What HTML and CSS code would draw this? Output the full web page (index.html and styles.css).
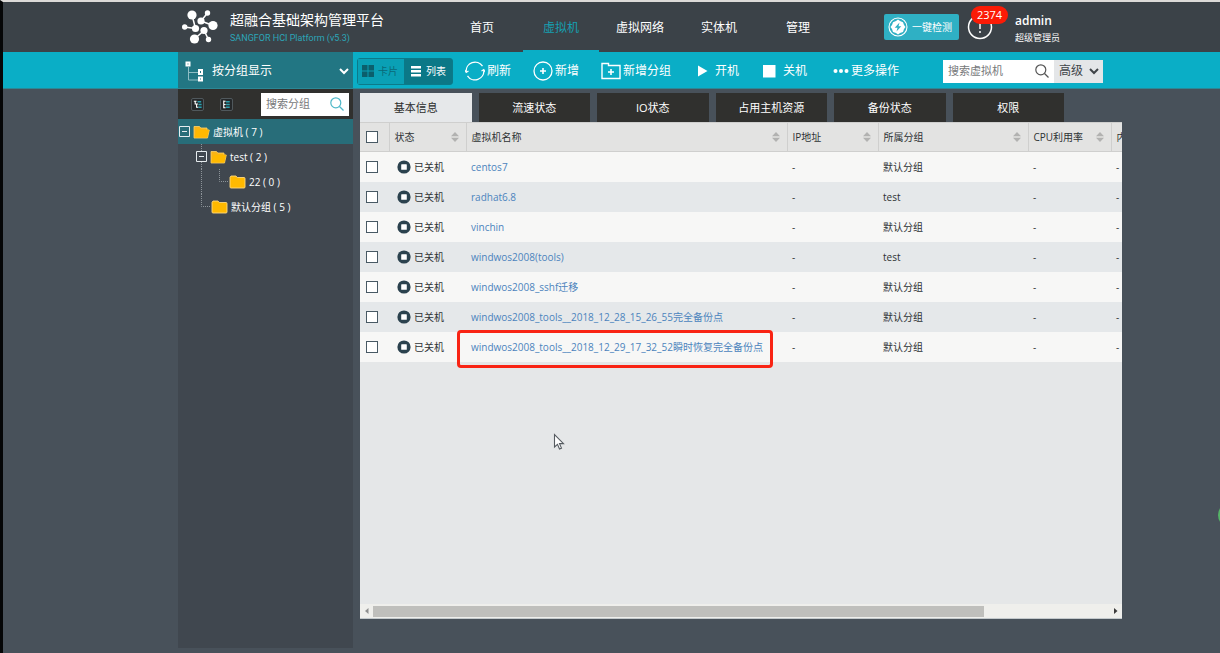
FILE: index.html
```html
<!DOCTYPE html>
<html lang="zh-CN">
<head>
<meta charset="utf-8">
<title>超融合基础架构管理平台</title>
<link rel="stylesheet" href="styles.css">
</head>
<body>
<svg class="defs" aria-hidden="true">
  <symbol id="i-stop" viewBox="0 0 14 14"><circle cx="7" cy="7" r="6.6" fill="#2b424e"/><rect x="4.2" y="4.2" width="5.6" height="5.6" rx=".6" fill="#fff"/></symbol>
  <symbol id="i-sort" viewBox="0 0 8 10"><path d="M0 4.2L4 0l4 4.200zM0 5.800h8L4 10z" fill="#b2b2b1"/></symbol>
  <symbol id="i-search" viewBox="0 0 14 14"><circle cx="5.800" cy="5.800" r="5" fill="none" stroke="currentColor" stroke-width="1.200"/><path d="M9.500 9.500l4 4" stroke="currentColor" stroke-width="1.300"/></symbol>
  <symbol id="i-chevron" viewBox="0 0 10 7"><path d="M1 1l4 4 4-4" fill="none" stroke="currentColor" stroke-width="2"/></symbol>
  <symbol id="i-open" viewBox="0 0 17 14"><path d="M1 12.500V1.500h5.500l1.300 1.500H14v2h2.300l-1.800 8H1z" fill="#f9b417" stroke="#ffd36b" stroke-width=".8"/><path d="M1.500 12.600L3.500 4.800H16l-1.700 7.800z" fill="#ffb900"/></symbol>
  <symbol id="i-folder" viewBox="0 0 17 14"><path d="M1 2.300L2 1h5l1.200 1.500H15q1 0 1 1V12q0 1-1 1H2q-1 0-1-1z" fill="#ffb900" stroke="#ffd97f" stroke-width=".9"/></symbol>
  <symbol id="i-minus" viewBox="0 0 11 11"><path d="M.5.5h10v10H.5zM3 5.500h5" fill="none" stroke="#e6ecef"/></symbol>
</svg>

<header class="header">
  <div class="wrap header-in">
    <div class="brand">
      <svg class="logo" viewBox="0 0 36 34" fill="#fff" stroke="#fff">
        <g stroke-width="1.500"><path d="M10 5l3.500 13.500M2.500 17l11 1.500M19 11l6.500-8M19 11l12 4.500M22 20.500l4.500 9M22 20.500l-9.500 8.500"/></g>
        <g stroke="none"><circle cx="10" cy="5" r="4.600"/><circle cx="25.500" cy="3" r="2.700"/><circle cx="2.700" cy="17" r="2.700"/><circle cx="13.500" cy="18.500" r="3.600"/><circle cx="19" cy="11" r="3.600"/><circle cx="31" cy="15.500" r="4.600"/><circle cx="22" cy="20.500" r="3.600"/><circle cx="12.500" cy="29" r="4.600"/><circle cx="26.500" cy="29.500" r="2.700"/></g>
      </svg>
      <div>
        <div class="brand-name">超融合基础架构管理平台</div>
        <div class="brand-sub">SANGFOR HCI Platform (v5.3)</div>
      </div>
    </div>
    <nav class="nav">
      <a href="#">首页</a><a href="#" class="on">虚拟机</a><a href="#">虚拟网络</a><a href="#">实体机</a><a href="#">管理</a>
    </nav>
    <div class="tools">
      <button class="detect" type="button"><svg class="ic20" viewBox="0 0 20 20"><circle cx="10" cy="10" r="9" fill="none" stroke="#fff" stroke-width="1.100"/><path d="M10 2.500l2 1.600 3 1.100 1 2.800 1.500 2-1.500 2-1 3-3 1-2 1.500L8 16l-3-1-1-3-1.500-2L4 8l1-2.800 3-1.100z" fill="#fff"/><path d="M11.500 5.500L6.700 10.700h2.800L8.500 14.500l4.800-5.200h-2.800z" fill="#2fb0c4"/></svg>一键检测</button>
      <button class="alert" type="button" aria-label="告警"><svg class="ic26" viewBox="0 0 26 26"><circle cx="13" cy="13" r="11.500" fill="none" stroke="#fff" stroke-width="1.500"/><path d="M13 9v6M13 17v2" stroke="#fff" stroke-width="1.500"/></svg><span class="badge">2374</span></button>
      <div class="user"><div class="user-name">admin</div><div class="user-role">超级管理员</div></div>
    </div>
  </div>
</header>

<div class="bar">
  <div class="wrap bar-in">
    <div class="group-mode">
      <svg class="tree-ic" viewBox="0 0 19 21"><path d="M3.500 6v13H13M3.500 11.500H13" fill="none" stroke="#8fbdc4"/><g fill="none" stroke="#fff" stroke-width="2"><path d="M1.500 1.500h3v3h-3zM14 9h3v4h-3zM14 16.500h3v3h-3z"/></g></svg>
      <select aria-label="显示方式"><option>按分组显示</option></select>
      <svg class="chev" aria-hidden="true"><use href="#i-chevron"/></svg>
    </div>
    <div class="bar-tools">
      <div class="toggle">
        <button type="button" class="card"><svg class="ic12" viewBox="0 0 12 12"><path d="M0 0h5.500v5.500H0zM6.500 0H12v5.500H6.500zM0 6.500h5.500V12H0zM6.500 6.500H12V12H6.500z" fill="#0b5f6c"/></svg>卡片</button>
        <button type="button" class="list"><svg class="ic12" viewBox="0 0 12 12"><path d="M1 1h10v2.500H1zM1 5h10v2.500H1zM1 9h10v2.500H1z" fill="#fff"/></svg>列表</button>
      </div>
      <div class="acts">
        <button type="button"><svg class="ic20" viewBox="0 0 20 20" fill="none" stroke="#fff" stroke-width="1.300"><path d="M1.200 11A8.900 8.900 0 0 1 17.500 5.200M18.800 9A8.900 8.900 0 0 1 2.500 14.800"/><path d="M0 9l1.200 2.500L3.500 10M20 11l-1.200-2.500L16.500 10" stroke-width="1.100"/></svg>刷新</button>
        <button type="button"><svg class="ic20" viewBox="0 0 20 20" fill="none" stroke="#fff"><circle cx="10" cy="10" r="9" stroke-width="1.300"/><path d="M10 7v6M7 10h6" stroke-width="1.600"/></svg>新增</button>
        <button type="button"><svg class="ic20" viewBox="0 0 20 20" fill="none" stroke="#fff"><path d="M1 17.500v-15h6.500v2H19v13z" stroke-width="1.400"/><path d="M10 8v6M7 11h6" stroke-width="1.600"/></svg>新增分组</button>
        <button type="button"><svg class="ic20" viewBox="0 0 20 20"><path d="M5 4.500L14.500 10 5 15.500z" fill="#fff"/></svg>开机</button>
        <button type="button"><svg class="ic20" viewBox="0 0 20 20"><path d="M2 4h12.500v12.500H2z" fill="#fff"/></svg>关机</button>
        <button type="button"><svg class="ic20" viewBox="0 0 20 20" fill="#fff"><circle cx="6.500" cy="10" r="2"/><circle cx="12" cy="10" r="2"/><circle cx="17.500" cy="10" r="2"/></svg>更多操作</button>
      </div>
      <div class="vm-search">
        <input type="text" placeholder="搜索虚拟机" aria-label="搜索虚拟机">
        <svg class="ic14" aria-hidden="true"><use href="#i-search"/></svg>
        <div class="adv"><select aria-label="高级"><option>高级</option></select><svg class="chev" aria-hidden="true"><use href="#i-chevron"/></svg></div>
      </div>
    </div>
  </div>
</div>

<main class="wrap main">
  <aside class="side">
    <div class="side-top">
      <button class="mini" type="button" aria-label="展开"><svg viewBox="0 0 12 12" fill="none"><path d="M2 2.500h3M3.500 2.500v3h3M5 5.500v3.500h2" stroke="#fff" stroke-width="1.200"/><path d="M6 3h4M7 6h3.500M7 9h3.500" stroke="#2b9fae" stroke-width="1.400"/></svg></button>
      <button class="mini" type="button" aria-label="折叠"><svg viewBox="0 0 12 12" fill="none"><path d="M3 1.500V10M3 2.500h2M3 6h2M3 9.500h2" stroke="#fff" stroke-width="1.200"/><path d="M5.500 3h4M5.500 6h4M5.500 9h4" stroke="#2b9fae" stroke-width="1.400"/></svg></button>
      <div class="side-search"><input type="text" placeholder="搜索分组" aria-label="搜索分组"><svg class="ic14" aria-hidden="true"><use href="#i-search"/></svg></div>
    </div>
    <div class="tree">
      <a href="#" class="node sel"><svg class="minus"><use href="#i-minus"/></svg><svg class="fold"><use href="#i-open"/></svg>虚拟机 ( 7 )</a>
      <a href="#" class="node"><svg class="line" viewBox="0 0 18 25"><path d="M5.500 0v25" /></svg><svg class="minus over"><use href="#i-minus"/></svg><svg class="fold"><use href="#i-open"/></svg>test ( 2 )</a>
      <a href="#" class="node"><svg class="line" viewBox="0 0 18 25"><path d="M5.500 0v25"/></svg><svg class="line" viewBox="0 0 18 25"><path d="M5.500 0v12.500H15"/></svg><svg class="fold"><use href="#i-folder"/></svg>22 ( 0 )</a>
      <a href="#" class="node"><svg class="line" viewBox="0 0 18 25"><path d="M5.500 0v12.500H15"/></svg><svg class="fold"><use href="#i-folder"/></svg>默认分组 ( 5 )</a>
    </div>
  </aside>

  <section class="content">
    <div class="tabs" role="tablist">
      <button type="button" role="tab" class="on">基本信息</button><button type="button" role="tab">流速状态</button><button type="button" role="tab">IO状态</button><button type="button" role="tab">占用主机资源</button><button type="button" role="tab">备份状态</button><button type="button" role="tab">权限</button>
    </div>
    <div class="panel">
      <div class="scroller">
        <table>
          <colgroup><col class="c-check"><col class="c-state"><col class="c-name"><col class="c-ip"><col class="c-group"><col class="c-cpu"><col class="c-mem"></colgroup>
          <thead><tr>
            <th><input type="checkbox" aria-label="全选"></th>
            <th><div>状态<svg class="sort"><use href="#i-sort"/></svg></div></th>
            <th><div>虚拟机名称<svg class="sort"><use href="#i-sort"/></svg></div></th>
            <th><div>IP地址<svg class="sort"><use href="#i-sort"/></svg></div></th>
            <th><div>所属分组<svg class="sort"><use href="#i-sort"/></svg></div></th>
            <th><div>CPU利用率<svg class="sort"><use href="#i-sort"/></svg></div></th>
            <th><div>内</div></th>
          </tr></thead>
          <tbody>
            <tr><td><input type="checkbox" aria-label="centos7"></td><td><span class="state"><svg><use href="#i-stop"/></svg>已关机</span></td><td><a href="#">centos7</a></td><td>-</td><td>默认分组</td><td>-</td><td>-</td></tr>
            <tr><td><input type="checkbox" aria-label="radhat6.8"></td><td><span class="state"><svg><use href="#i-stop"/></svg>已关机</span></td><td><a href="#">radhat6.8</a></td><td>-</td><td>test</td><td>-</td><td>-</td></tr>
            <tr><td><input type="checkbox" aria-label="vinchin"></td><td><span class="state"><svg><use href="#i-stop"/></svg>已关机</span></td><td><a href="#">vinchin</a></td><td>-</td><td>默认分组</td><td>-</td><td>-</td></tr>
            <tr><td><input type="checkbox" aria-label="windwos2008(tools)"></td><td><span class="state"><svg><use href="#i-stop"/></svg>已关机</span></td><td><a href="#">windwos2008(tools)</a></td><td>-</td><td>test</td><td>-</td><td>-</td></tr>
            <tr><td><input type="checkbox" aria-label="windwos2008_sshf迁移"></td><td><span class="state"><svg><use href="#i-stop"/></svg>已关机</span></td><td><a href="#">windwos2008_sshf迁移</a></td><td>-</td><td>默认分组</td><td>-</td><td>-</td></tr>
            <tr><td><input type="checkbox" aria-label="完全备份点"></td><td><span class="state"><svg><use href="#i-stop"/></svg>已关机</span></td><td><a href="#">windwos2008_tools__2018_12_28_15_26_55完全备份点</a></td><td>-</td><td>默认分组</td><td>-</td><td>-</td></tr>
            <tr><td><input type="checkbox" aria-label="瞬时恢复完全备份点"></td><td><span class="state"><svg><use href="#i-stop"/></svg>已关机</span></td><td><a href="#">windwos2008_tools__2018_12_29_17_32_52瞬时恢复完全备份点</a></td><td>-</td><td>默认分组</td><td>-</td><td>-</td></tr>
          </tbody>
        </table>
      </div>
      <div class="hbar">
        <svg viewBox="0 0 13 12"><path d="M8.500 3v6L5 6z" fill="#8f9090"/></svg>
        <div class="track"><div class="thumb"></div></div>
        <svg viewBox="0 0 13 12"><path d="M5 3v6l3.500-3z" fill="#3c3c3c"/></svg>
      </div>
      <div class="mark"></div>
      <svg class="cursor" viewBox="0 0 12 18"><path d="M1.500 1.500v12.500l3-2.700 2 4.700 2-.9-2-4.500h4z" fill="#fff" stroke="#555b60" stroke-width="1.100"/></svg>
    </div>
  </section>
</main>
<div class="float-dot"></div>
</body>
</html>
```
FILE: styles.css
```css
* { box-sizing: border-box; }
body {
  margin: 0;
  position: relative;
  display: flex;
  flex-direction: column;
  min-height: 100vh;
  overflow-x: hidden;
  border-top: 2px solid #dcdad8;
  border-left: 3px solid #050607;
  background: #48515a;
  color: #fff;
  font-family: "Open Sans", "Noto Sans CJK SC", sans-serif;
  font-size: 10px;
  line-height: 16px;
}
button, input, select { font: inherit; color: inherit; border: 0; padding: 0; margin: 0; background: none; border-radius: 0; }
button { display: flex; align-items: center; white-space: nowrap; }
select { appearance: none; outline: 0; }
a { color: inherit; text-decoration: none; }
svg { display: block; flex: none; }
.defs { position: absolute; width: 0; height: 0; }
.wrap { margin: 0 98px 0 175px; }
.ic12 { width: 12px; height: 12px; }
.ic14 { width: 14px; height: 14px; }
.ic20 { width: 20px; height: 20px; }
.ic26 { width: 26px; height: 26px; }
.chev { width: 10px; height: 7px; }

.header { background: #3b4248; }
.header-in { display: flex; height: 50px; }
.brand { display: flex; align-items: center; gap: 12px; width: 266px; padding-left: 4px; }
.logo { width: 36px; height: 34px; }
.brand-name { font-size: 14px; line-height: 22px; white-space: nowrap; }
.brand-sub { color: #2ba6b8; font-family: Roboto, sans-serif; font-size: 9px; line-height: 14px; }
.nav { display: flex; gap: 3px; }
.nav a { width: 76px; text-align: center; font-size: 12px; line-height: 52px; border-bottom: 2px solid transparent; }
.nav .on { color: #159fb1; border-color: #0aaec6; }
.tools { display: flex; align-items: center; margin-left: auto; padding-right: 62px; gap: 8px; }
.detect { height: 26px; padding: 0 7px 0 4px; gap: 4px; background: #2fb0c4; border-radius: 2px; }
.alert { position: relative; }
.badge { position: absolute; left: 4px; top: -8px; padding: 0 6px; border-radius: 10px; background: #fb1b06; line-height: 18px; font-size: 11px; }
.user { padding-left: 14px; padding-top: 4px; }
.user-name { font-size: 12px; font-weight: 600; line-height: 18px; }
.user-role { font-size: 9px; }

.bar { background: #0aaec6; border-bottom: 1px solid #2c8795; }
.bar-in { display: flex; height: 36px; }
.group-mode { display: flex; align-items: center; width: 175px; padding: 2px 4px 0 7px; gap: 8px; background: #227683; font-size: 12px; }
.group-mode select { flex: 1; min-width: 0; }
.tree-ic { width: 19px; height: 21px; }
.bar-tools { flex: 1; display: flex; align-items: center; padding: 2px 19px 0 4px; }
.toggle { display: flex; height: 27px; border: 1px solid #0c7a89; border-radius: 3px; background: #0f8797; }
.toggle button { gap: 4px; }
.toggle .card { width: 46px; padding-left: 4px; color: #0b6977; background: #0aa0b5; }
.toggle .list { width: 48px; padding-left: 6px; background: #0b7887; }
.acts { display: flex; gap: 22px; margin-left: 12px; font-size: 12px; }
.acts button { gap: 2px; }
.vm-search { display: flex; align-items: center; margin-left: auto; height: 23px; background: #fff; color: #555; font-size: 11px; }
.vm-search input { width: 92px; padding-left: 5px; }
.vm-search .adv { display: flex; align-items: center; align-self: stretch; gap: 5px; margin-left: 5px; padding: 0 4px 0 5px; background: #e4e6e8; color: #3f4448; font-size: 12px; }
.adv select { width: 25px; }
input::placeholder { color: #77797b; opacity: 1; }

.main { flex: 1; display: flex; width: auto; }
.side { width: 175px; margin-bottom: 5px; background: #40474f; }
.side-top { display: flex; align-items: center; height: 30px; padding: 0 4px 0 13px; gap: 16px; background: #30302e; }
.mini { width: 13px; height: 13px; border: 1px solid #50585c; border-radius: 2px; background: #25282a; }
.mini svg { width: 11px; height: 11px; }
.side-search { display: flex; align-items: center; margin-left: auto; width: 88px; height: 23px; padding: 0 5px; background: #fff; color: #4fb8c8; font-size: 11px; }
.side-search input { flex: 1; min-width: 0; }
.node { display: flex; align-items: center; height: 25px; padding-left: 1px; white-space: pre; }
.sel { background: #286d79; }
.minus { width: 11px; height: 11px; margin-right: 3px; }
.over { margin-left: -1px; background: #40474f; }
.fold { width: 17px; height: 14px; margin-right: 3px; }
.line { width: 18px; height: 25px; margin-right: 0; fill: none; stroke: #8d9499; stroke-dasharray: 1 1; }
.line:first-child { margin-left: 17px; margin-right: -3px; }
.line:has(+ .over) { margin-right: -17px; }
.line:has(+ .fold) { margin-right: -3px; }
.line:has(+ .line) { margin-right: 0; }

.content { flex: 1; min-width: 0; display: flex; flex-direction: column; margin: 4px 0 34px 7px; }
.tabs { display: flex; gap: 7px; padding-right: 58px; }
.tabs button { flex: 1 1 0; justify-content: center; height: 29px; background: #30302e; font-size: 11px; }
.tabs .on { background: #e6e8ea; color: #2c2c2c; }
.panel { position: relative; flex: 1; display: flex; flex-direction: column; background: #e5e7e8; color: #2e3234; }
.scroller { flex: 1; overflow: hidden; }
table { width: 920px; table-layout: fixed; border-collapse: collapse; }
.c-check { width: 29px; }
.c-state { width: 77px; }
.c-name { width: 321px; }
.c-ip { width: 91px; }
.c-group { width: 150px; }
.c-cpu { width: 83px; }
th { height: 29px; padding: 0 5px; border: solid #cfcfce; border-width: 1px 1px 1px 0; background: #e3e3e2; font-weight: 400; text-align: left; }
th div { display: flex; align-items: center; justify-content: space-between; padding-right: 2px; white-space: nowrap; }
.sort { width: 8px; height: 10px; }
td { height: 30px; padding: 0 5px; white-space: nowrap; }
tbody tr:nth-child(odd) { background: #f7f7f6; }
tbody tr:nth-child(even) { background: #e5e8ea; }
td a { color: #4c84bd; }
input[type="checkbox"] { display: block; appearance: none; width: 12px; height: 12px; margin-left: 1px; border: 1px solid #485964; background: #fff; }
.state { display: flex; align-items: center; gap: 3px; padding-left: 3px; }
.state svg { width: 14px; height: 14px; }
.hbar { display: flex; height: 15px; align-items: center; padding: 1px 0; background: #efefec; border-bottom: 1px solid #c3c9cc; }
.hbar svg { width: 13px; height: 12px; }
.track { flex: 1; height: 11px; }
.thumb { width: 83%; height: 100%; background: #bfbfbc; }
.mark { position: absolute; left: 97px; top: 208px; width: 316px; height: 38px; border: 3px solid #f92414; border-radius: 4px; }
.cursor { position: absolute; left: 193px; top: 311px; width: 12px; height: 18px; }
.float-dot { position: absolute; right: -22px; top: 501px; width: 24px; height: 24px; border-radius: 12px; background: #55b467; }
```
